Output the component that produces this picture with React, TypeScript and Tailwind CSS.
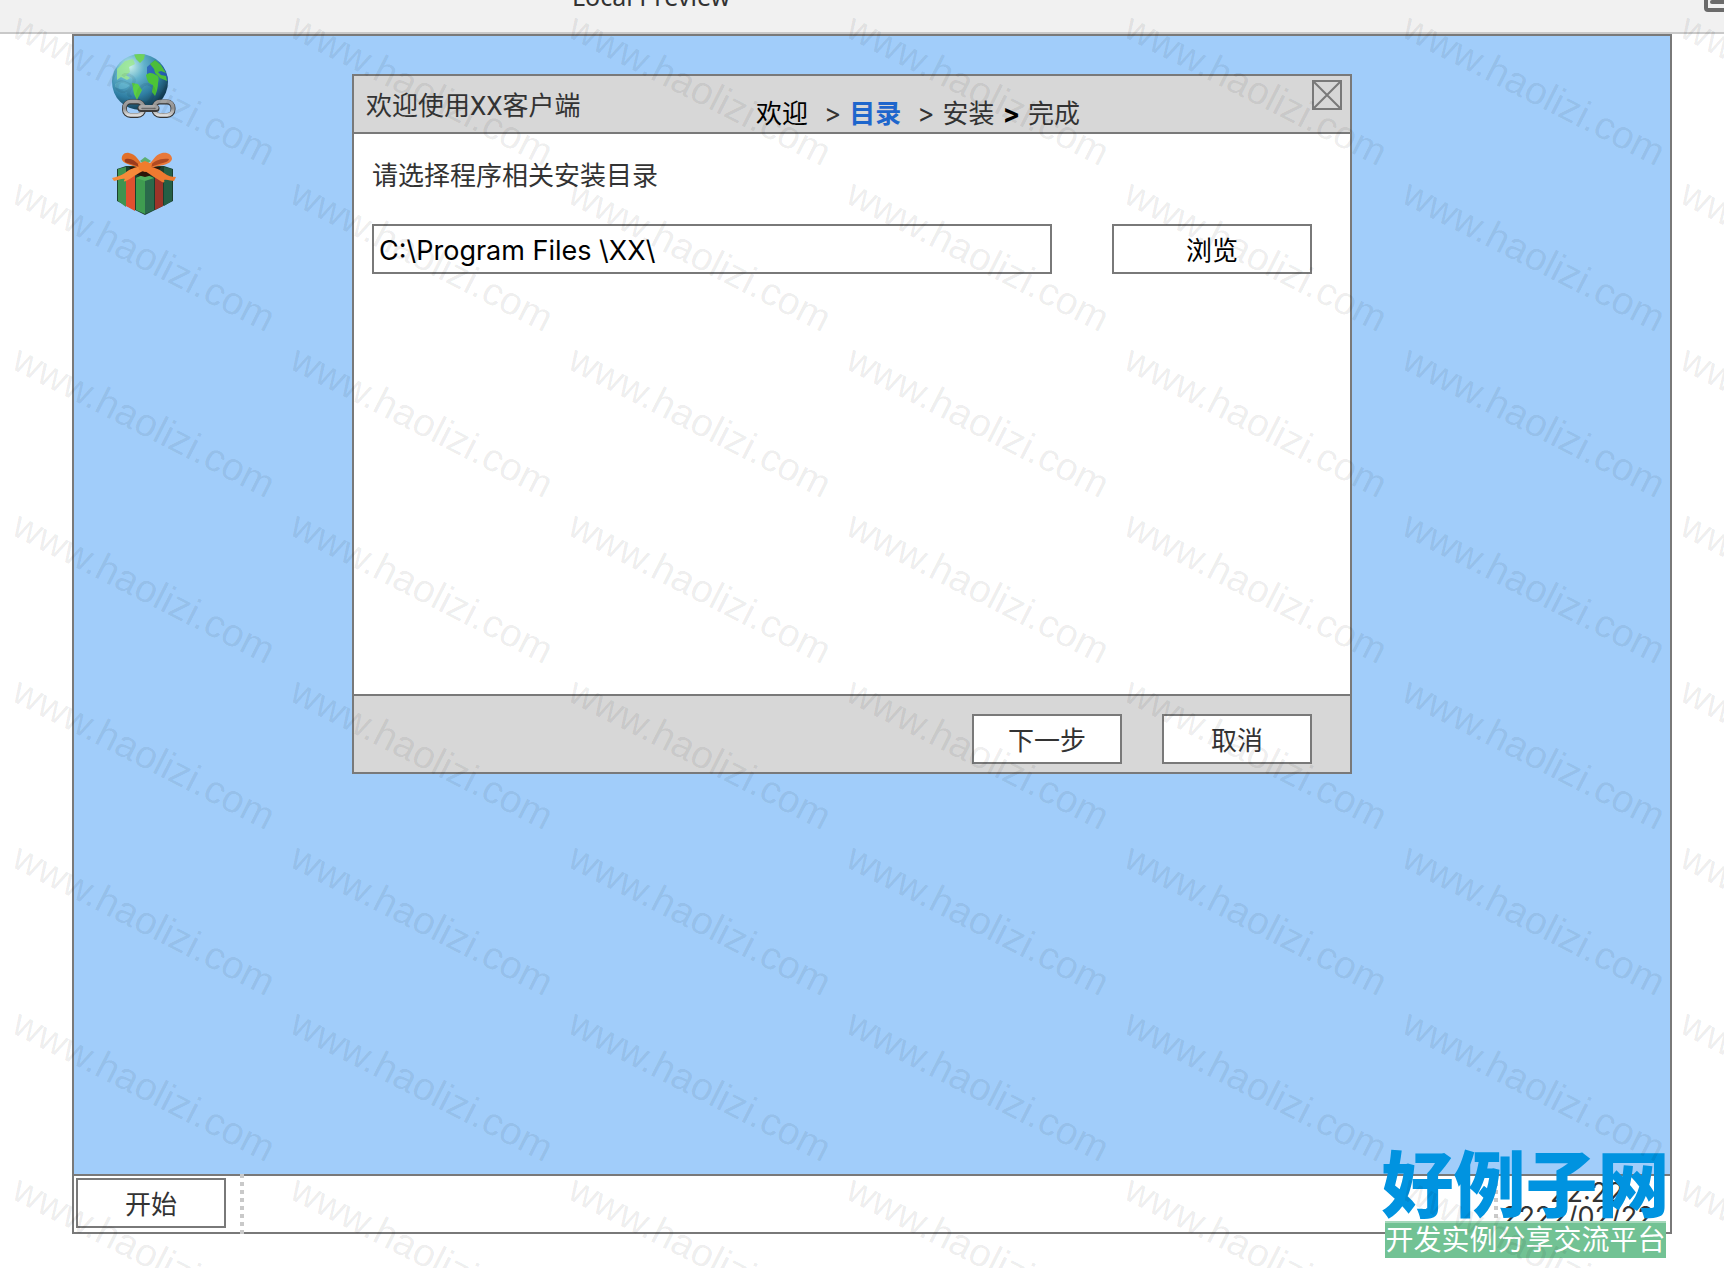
import { useState } from "react";
import type { ReactNode } from "react";
import clsx from "clsx";

type Step = { label: string; tone: string; sep?: string };

const STEPS: Step[] = [
  { label: "欢迎", tone: "text-black", sep: "ml-4 mr-2" },
  { label: "目录", tone: "font-bold text-[#1e66cc]", sep: "ml-4 mr-2" },
  { label: "安装", tone: "text-[#333]", sep: "ml-2 mr-2 font-bold text-black" },
  { label: "完成", tone: "text-[#333]" },
];

const MARKS = Array.from({ length: 56 }, (_, i) => i);

function GlobeIcon() {
  return (
    <svg viewBox="0 0 64 64" className="size-16" aria-hidden>
      <defs>
        <radialGradient id="sea" cx="0.32" cy="0.22" r="0.85">
          <stop offset="0" stopColor="#c9f0ea" />
          <stop offset="0.3" stopColor="#62b2cc" />
          <stop offset="0.65" stopColor="#2f7ea3" />
          <stop offset="1" stopColor="#0c2f42" />
        </radialGradient>
        <linearGradient id="steel" x1="0" y1="0" x2="0" y2="1">
          <stop offset="0" stopColor="#a2a2a2" />
          <stop offset="0.5" stopColor="#8f8f8f" />
          <stop offset="1" stopColor="#dcdcdc" />
        </linearGradient>
        <clipPath id="disc">
          <circle cx="28" cy="28" r="28" />
        </clipPath>
      </defs>
      <circle cx="28" cy="28" r="28" fill="url(#sea)" />
      <g clipPath="url(#disc)">
        <path d="M35 13l8-7 9 7 5 14-6-2-8-4-8-1z" fill="#2455b8" opacity="0.75" />
        <path d="M22 0h11l-1 5-4 4-4-4z" fill="#6fd25a" />
        <path d="M5 15l8-8 8-2 2 5-6 3 1 5-4 3 4 3-3 2-6-3-4 3z" fill="#9be892" opacity="0.85" />
        <path d="M34 21c3-3 7-2 10 0 3 1 3 4 2 8 0 4-1 8-3 13l-3-4 1-7c-4-1-6-4-7-10z" fill="#4cc437" />
        <path d="M38 10l5-4 6 5 5 8-5-2-3 1 3 3 5 1 1 5-7-3-5-5-1-4z" fill="#4cbd3a" />
        <path d="M20 29l6 1 4 6-2 4-3 6-3-6z" fill="#5bd046" />
        <path d="M3 30c5-4 11-3 15 1-4 5-10 5-15 2z" fill="#7fd0e6" opacity="0.35" />
      </g>
      <g fill="none" strokeLinecap="round">
        <rect x="12.500" y="48" width="19" height="13.500" rx="6" stroke="#353535" strokeWidth="5" />
        <rect x="42" y="48" width="19" height="13.500" rx="6" stroke="#353535" strokeWidth="5" />
        <rect x="12.500" y="47.500" width="19" height="13.500" rx="6" stroke="url(#steel)" strokeWidth="3.500" />
        <rect x="42" y="47.500" width="19" height="13.500" rx="6" stroke="url(#steel)" strokeWidth="3.500" />
        <path d="M29 54.500h15" stroke="#3b3b3b" strokeWidth="7" />
        <path d="M29 53.500h15" stroke="#a9a9a9" strokeWidth="5" />
        <path d="M30 54.500h13" stroke="#6b6b6b" strokeWidth="1.500" />
      </g>
    </svg>
  );
}

function GiftIcon() {
  return (
    <svg viewBox="0 0 64 64" className="size-16" aria-hidden>
      <path d="M5 17l9-3h38l9 3v32L33 63 5 49z" fill="#1c3f2f" />
      <path d="M6 17l8-2v40l-8-6z" fill="#3f9350" />
      <path d="M14 20l9 4v35l-9-5z" fill="#e0502f" />
      <path d="M24 26l9-3v39l-9-4z" fill="#3f9c50" />
      <path d="M33 23l9 3v32l-9 4z" fill="#2a6a4b" />
      <path d="M43 24l8-4v34l-8 4z" fill="#9c3429" />
      <path d="M52 15l8 2v32l-8 5z" fill="#255f45" />
      <path d="M24 26l9-4 9 4-9 3z" fill="#4fae5c" />
      <path d="M28 9l5-4 6 4-6 4z" fill="#5cae72" />
      <path d="M17 15h32l-5 7-11 3-11-3z" fill="#2b1509" />
      <path d="M32 15C27 9 24 2 17 1c-5-1-8 3-7 7 3 5 12 5 21 10z" fill="#e2702a" />
      <path d="M29 15c-4-4-8-9-15-8-2 0-2 3 1 4 4 1 8 2 14 5z" fill="#9c3b1c" />
      <path d="M34 15C41 10 42 3 50 1c6-1 10 2 10 6-2 7-14 6-25 10z" fill="#e8793a" />
      <path d="M38 14c4-5 10-8 19-7 0 4-10 4-18 8z" fill="#b04a22" />
      <path d="M31 14c-8 1-13 3-18 7-5 3-9 4-13 5l2 3c3 0 8-3 11-2-2 2-1 3 1 2 6-3 12-8 19-11z" fill="#f58a3a" />
      <path d="M34 14c8 1 13 3 18 7 4 3 8 4 12 4l-2 4c-3 0-7-2-10-1 1 2 0 3-2 2-5-3-11-7-17-11z" fill="#ef7a30" />
      <path d="M26 12l7-3 7 3-1 6-6 2-6-2z" fill="#f07c2c" />
    </svg>
  );
}

function BoxButton({ className, children }: { className?: string; children: ReactNode }) {
  return (
    <button
      type="button"
      className={clsx("h-[50px] shrink-0 border-2 border-[#797979] bg-white pt-0.5 leading-[46px]", className)}
    >
      {children}
    </button>
  );
}

function DottedRule() {
  return (
    <span
      className="w-1 shrink-0 self-stretch bg-[repeating-linear-gradient(to_bottom,#c9c9c9_0_4px,transparent_4px_8px)]"
      aria-hidden
    />
  );
}

function InstallDialog() {
  const [path, setPath] = useState("C:\\Program Files \\XX\\");
  return (
    <section
      role="dialog"
      aria-labelledby="dialog-title"
      className="flex min-h-[700px] w-full max-w-[1000px] flex-col border-2 border-[#797979] bg-white"
    >
      <header className="flex h-[58px] items-start border-b-2 border-[#797979] bg-[#d7d7d7]">
        <h1
          id="dialog-title"
          className="w-[402px] shrink-0 pt-0.5 pl-3 font-[Roboto,'Noto_Sans_CJK_SC',sans-serif] leading-[56px]"
        >
          欢迎使用XX客户端
        </h1>
        <ol className="flex pt-[18px] leading-10">
          {STEPS.map((s) => (
            <li key={s.label} className="flex whitespace-nowrap">
              <span className={s.tone}>{s.label}</span>
              {s.sep && <span className={s.sep}>&gt;</span>}
            </li>
          ))}
        </ol>
        <button type="button" aria-label="关闭" className="mt-1 mr-2 ml-auto size-[30px]">
          <svg viewBox="0 0 30 30" fill="none" stroke="#797979" strokeWidth="2" className="size-full">
            <path d="M1 1h28v28H1zM1 1l28 28M29 1L1 29" />
          </svg>
        </button>
      </header>
      <div className="flex-1 pt-5 pr-[38px] pl-[18px]">
        <label htmlFor="install-path" className="block pt-px leading-[42px]">
          请选择程序相关安装目录
        </label>
        <div className="mt-[27px] flex gap-[60px]">
          <input
            id="install-path"
            value={path}
            onChange={(e) => setPath(e.target.value)}
            className="h-[50px] min-w-0 flex-1 border-2 border-[#797979] bg-white px-[5px] pt-0.5 text-[27px] text-black outline-none"
          />
          <BoxButton className="w-[200px] text-black">浏览</BoxButton>
        </div>
      </div>
      <footer className="flex h-[78px] justify-end gap-10 border-t-2 border-[#797979] bg-[#d7d7d7] pt-[18px] pr-[38px]">
        <BoxButton className="w-[150px]">下一步</BoxButton>
        <BoxButton className="w-[150px]">取消</BoxButton>
      </footer>
    </section>
  );
}

function Taskbar() {
  return (
    <div className="-mx-0.5 -mb-0.5 flex h-[60px] border-2 border-[#797979] bg-white">
      <BoxButton className="mt-0.5 ml-0.5 w-[150px]">开始</BoxButton>
      <div className="-my-0.5 ml-3.5 flex flex-1 justify-between">
        <DottedRule />
        <div className="flex">
          <DottedRule />
          <div className="w-[172px] pt-[7px] pl-1 text-[27px] leading-6 whitespace-nowrap">
            <div className="pl-12">22:22</div>
            <div>2222/02/22</div>
          </div>
        </div>
      </div>
    </div>
  );
}

function SiteBadge() {
  return (
    <div className="absolute right-1 -bottom-[26px] w-[281px] whitespace-nowrap">
      <div className="-mx-1 flex justify-center text-[72px] leading-[72px] font-black text-[#0093e0]">好例子网</div>
      <div className="border-t-2 border-[#a5d8bb] bg-[#72c294] text-center text-[28px] leading-[35px] text-white">
        开发实例分享交流平台
      </div>
    </div>
  );
}

function Watermark() {
  return (
    <div
      className="pointer-events-none absolute inset-0 grid auto-rows-[166px] grid-cols-[repeat(7,278px)] overflow-hidden pt-px pl-3.5"
      aria-hidden
    >
      {MARKS.map((i) => (
        <span
          key={i}
          className="origin-top-left rotate-[27deg] pl-3 font-['Liberation_Sans'] text-[39px] leading-10 whitespace-nowrap text-black/8"
        >
          www.haolizi.com
        </span>
      ))}
    </div>
  );
}

export default function App() {
  return (
    <div className="relative flex min-h-screen flex-col overflow-hidden bg-white pb-[34px] font-[Inter,'Noto_Sans_CJK_SC',sans-serif] text-[26px] text-[#333]">
      <div className="flex h-[34px] justify-between overflow-hidden border-b-2 border-[#c9c9c9] bg-[#f1f1f1]">
        <span className="-mt-[22px] ml-[572px] font-['Noto_Sans'] text-[25px] leading-9">Local Preview</span>
        <svg viewBox="0 0 20 12" className="h-3 w-5" fill="none" stroke="#6b6b6b" strokeWidth="4" aria-hidden>
          <path d="M2 0v8q0 2 2 2h16" />
          <path d="M8 2h12" strokeLinecap="round" />
        </svg>
      </div>
      <main className="relative mr-[52px] ml-[72px] flex flex-1 flex-col border-2 border-[#797979] bg-[#a1cdfa]">
        <div className="flex flex-1 items-start pb-10">
          <div className="mt-[18px] mr-44 ml-[38px] flex shrink-0 flex-col gap-[34px]">
            <GlobeIcon />
            <GiftIcon />
          </div>
          <div className="mt-[38px] flex flex-1">
            <InstallDialog />
          </div>
        </div>
        <Taskbar />
        <SiteBadge />
      </main>
      <Watermark />
    </div>
  );
}
